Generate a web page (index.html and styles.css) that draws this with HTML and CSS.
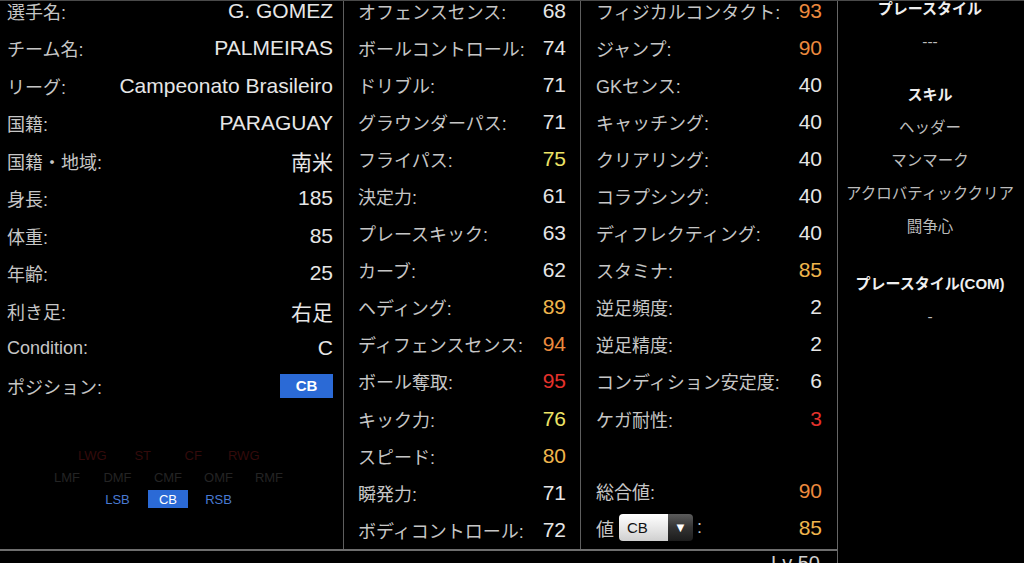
FILE: index.html
```html
<!DOCTYPE html>
<html lang="ja">
<head>
<meta charset="utf-8">
<link rel="stylesheet" href="styles.css">
</head>
<body>
<div class="screen">
  <div class="main">
    <div class="cols">
      <section class="col col-info">
        <div class="rows rows-info">
          <div class="row"><span class="lbl">選手名:</span><span class="val">G. GOMEZ</span></div>
          <div class="row"><span class="lbl">チーム名:</span><span class="val">PALMEIRAS</span></div>
          <div class="row"><span class="lbl">リーグ:</span><span class="val">Campeonato Brasileiro</span></div>
          <div class="row"><span class="lbl">国籍:</span><span class="val">PARAGUAY</span></div>
          <div class="row"><span class="lbl">国籍・地域:</span><span class="val">南米</span></div>
          <div class="row"><span class="lbl">身長:</span><span class="val">185</span></div>
          <div class="row"><span class="lbl">体重:</span><span class="val">85</span></div>
          <div class="row"><span class="lbl">年齢:</span><span class="val">25</span></div>
          <div class="row"><span class="lbl">利き足:</span><span class="val">右足</span></div>
          <div class="row"><span class="lbl">Condition:</span><span class="val">C</span></div>
          <div class="row"><span class="lbl">ポジション:</span><span class="badge">CB</span></div>
        </div>
        <div class="posgrid">
          <div class="prow fw"><span class="pos">LWG</span><span class="pos">ST</span><span class="pos">CF</span><span class="pos">RWG</span></div>
          <div class="prow mf"><span class="pos">LMF</span><span class="pos">DMF</span><span class="pos">CMF</span><span class="pos">OMF</span><span class="pos">RMF</span></div>
          <div class="prow df"><span class="pos">LSB</span><span class="pos"><span class="pos-on">CB</span></span><span class="pos">RSB</span></div>
        </div>
      </section>
      <section class="col col-stats">
        <div class="rows rows-stats">
          <div class="row"><span class="lbl">オフェンスセンス:</span><span class="val">68</span></div>
          <div class="row"><span class="lbl">ボールコントロール:</span><span class="val">74</span></div>
          <div class="row"><span class="lbl">ドリブル:</span><span class="val">71</span></div>
          <div class="row"><span class="lbl">グラウンダーパス:</span><span class="val">71</span></div>
          <div class="row"><span class="lbl">フライパス:</span><span class="val c-yellow">75</span></div>
          <div class="row"><span class="lbl">決定力:</span><span class="val">61</span></div>
          <div class="row"><span class="lbl">プレースキック:</span><span class="val">63</span></div>
          <div class="row"><span class="lbl">カーブ:</span><span class="val">62</span></div>
          <div class="row"><span class="lbl">ヘディング:</span><span class="val c-gold">89</span></div>
          <div class="row"><span class="lbl">ディフェンスセンス:</span><span class="val c-orange">94</span></div>
          <div class="row"><span class="lbl">ボール奪取:</span><span class="val c-red">95</span></div>
          <div class="row"><span class="lbl">キック力:</span><span class="val c-yellow">76</span></div>
          <div class="row"><span class="lbl">スピード:</span><span class="val c-gold">80</span></div>
          <div class="row"><span class="lbl">瞬発力:</span><span class="val">71</span></div>
          <div class="row"><span class="lbl">ボディコントロール:</span><span class="val">72</span></div>
        </div>
      </section>
      <section class="col col-stats2">
        <div class="rows rows-stats">
          <div class="row"><span class="lbl">フィジカルコンタクト:</span><span class="val c-orange">93</span></div>
          <div class="row"><span class="lbl">ジャンプ:</span><span class="val c-orange">90</span></div>
          <div class="row"><span class="lbl">GKセンス:</span><span class="val">40</span></div>
          <div class="row"><span class="lbl">キャッチング:</span><span class="val">40</span></div>
          <div class="row"><span class="lbl">クリアリング:</span><span class="val">40</span></div>
          <div class="row"><span class="lbl">コラプシング:</span><span class="val">40</span></div>
          <div class="row"><span class="lbl">ディフレクティング:</span><span class="val">40</span></div>
          <div class="row"><span class="lbl">スタミナ:</span><span class="val c-gold">85</span></div>
          <div class="row"><span class="lbl">逆足頻度:</span><span class="val">2</span></div>
          <div class="row"><span class="lbl">逆足精度:</span><span class="val">2</span></div>
          <div class="row"><span class="lbl">コンディション安定度:</span><span class="val">6</span></div>
          <div class="row"><span class="lbl">ケガ耐性:</span><span class="val c-red">3</span></div>
          <div class="row row-blank"></div>
          <div class="row row-total"><span class="lbl">総合値:</span><span class="val c-orange">90</span></div>
          <div class="row row-total">
            <span class="lbl lbl-sel">値<span class="sel"><span class="sel-text">CB</span><span class="sel-btn">▼</span></span>:</span>
            <span class="val c-gold">85</span>
          </div>
        </div>
      </section>
    </div>
    <div class="footer"><span class="lv">Lv 50</span></div>
  </div>
  <aside class="side">
    <div class="side-h side-first">プレースタイル</div>
    <div class="side-i">---</div>
    <div class="side-h side-gap">スキル</div>
    <div class="side-i">ヘッダー</div>
    <div class="side-i">マンマーク</div>
    <div class="side-i">アクロバティッククリア</div>
    <div class="side-i">闘争心</div>
    <div class="side-h side-gap2">プレースタイル(COM)</div>
    <div class="side-i side-last">-</div>
  </aside>
</div>
</body>
</html>
```
FILE: styles.css
```css
html, body {
  margin: 0;
  padding: 0;
  background: #000;
  overflow: hidden;
}

.screen {
  display: flex;
  width: 1024px;
  height: 563px;
  border-top: 1px solid #4a4a4a;
  box-sizing: border-box;
  overflow: hidden;
  font-family: "Liberation Sans", "Noto Sans CJK JP", sans-serif;
}

.main {
  width: 838px;
  flex: none;
  border-right: 1px solid #666;
  box-sizing: border-box;
  display: flex;
  flex-direction: column;
}

.cols {
  display: flex;
  height: 550px;
  flex: none;
  border-bottom: 2px solid #6e6e6e;
  box-sizing: border-box;
}

.col {
  box-sizing: border-box;
  overflow: hidden;
}

.col-info {
  width: 344px;
  border-right: 1px solid #5e5e5e;
  padding: 0 10px 0 7px;
}

.col-stats {
  width: 237px;
  border-right: 1px solid #5e5e5e;
  padding: 0 14px 0 14px;
}

.col-stats2 {
  flex: 1;
  padding: 0 15px 0 15px;
}

.rows-info {
  margin-top: -9px;
}

.rows-stats {
  margin-top: -9px;
}

.row {
  display: flex;
  justify-content: space-between;
  align-items: center;
  height: 37.1px;
  white-space: nowrap;
}

.rows-info .row {
  height: 37.5px;
}

.row-total {
  position: relative;
  top: -2px;
}

.lbl {
  font-size: 18px;
  color: #c6c6c6;
}

.val {
  font-size: 21px;
  color: #e6e6e6;
}

.c-yellow { color: #eee466; }
.c-gold { color: #efb54c; }
.c-orange { color: #ec8a3e; }
.c-red { color: #e5322c; }

.badge {
  display: inline-flex;
  align-items: center;
  justify-content: center;
  width: 53px;
  height: 24px;
  background: #2b6ad6;
  color: #fff;
  font-weight: bold;
  font-size: 15px;
  margin-top: 0;
}

.posgrid {
  margin-top: 39.5px;
  padding-right: 4px;
  display: flex;
  flex-direction: column;
}

.prow {
  display: flex;
  justify-content: center;
  height: 22px;
  align-items: center;
}

.pos {
  width: 50.5px;
  text-align: center;
  font-size: 13px;
  display: flex;
  justify-content: center;
}

.fw .pos { color: #330b0b; }
.mf .pos { color: #242424; }
.df .pos { color: #4a7ad2; }

.pos-on {
  display: inline-flex;
  align-items: center;
  justify-content: center;
  width: 40px;
  height: 18px;
  background: #2b6ad6;
  color: #fff;
}

.lbl-sel {
  display: flex;
  align-items: center;
}

.sel {
  display: inline-flex;
  margin-left: 5px;
  margin-right: 4px;
  height: 27px;
  border-radius: 4px;
  overflow: hidden;
}

.sel-text {
  width: 49px;
  box-sizing: border-box;
  padding-left: 8px;
  display: flex;
  align-items: center;
  font-size: 15px;
  color: #111;
  background: linear-gradient(#ffffff, #e6e6e6 55%, #cfcfcf);
}

.sel-btn {
  width: 25px;
  display: flex;
  align-items: center;
  justify-content: center;
  font-size: 13px;
  color: #fff;
  background: linear-gradient(#5c5c5c, #333 50%, #1c1c1c);
}

.footer {
  display: flex;
  justify-content: flex-end;
  padding: 2px 17px 0 0;
}

.lv {
  font-size: 20px;
  line-height: 20px;
  color: #cfcfcf;
}

.side {
  flex: 1;
  text-align: center;
  white-space: nowrap;
  padding-right: 2px;
}

.side-h {
  font-size: 15px;
  font-weight: bold;
  color: #efefef;
  line-height: 33px;
  height: 33px;
}

.side-i {
  font-size: 15.5px;
  color: #bcbcbc;
  line-height: 33px;
  height: 33px;
}

.side-first {
  margin-top: -9.5px;
}

.side-gap {
  margin-top: 20px;
}

.side-gap2 {
  margin-top: 24px;
}
```
